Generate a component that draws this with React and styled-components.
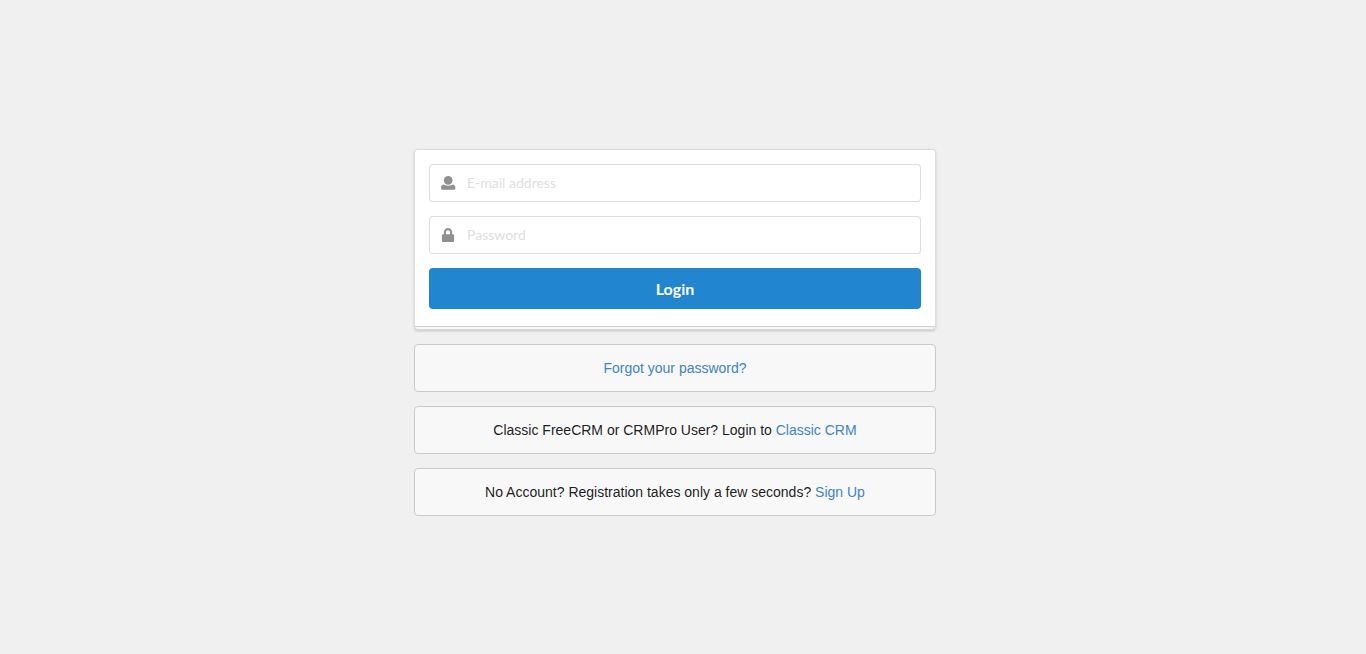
import React from "react";
import styled, { createGlobalStyle } from "styled-components";

const GlobalStyle = createGlobalStyle`
  *, *::before, *::after {
    box-sizing: border-box;
  }
  body {
    margin: 0;
    background: #f0f0f0;
    color: rgba(0, 0, 0, 0.9);
    font-family: Arial, "Liberation Sans", sans-serif;
    font-size: 14px;
    line-height: 18px;
  }
`;

const Page = styled.main`
  display: flex;
  justify-content: center;
  align-items: center;
  min-height: 100vh;
  padding: 11px 16px 0 0;
`;

const Column = styled.div`
  display: flex;
  flex-direction: column;
  gap: 14px;
  width: 100%;
  max-width: 522px;
`;

const LoginCard = styled.form`
  position: relative;
  display: flex;
  flex-direction: column;
  gap: 14px;
  padding: 14px 14px 20px;
  background: #fff;
  border: 1px solid rgba(34, 36, 38, 0.15);
  border-radius: 4px;
  box-shadow: 0 1px 3px 0 rgba(34, 36, 38, 0.16);

  &::after {
    content: "";
    position: absolute;
    left: 0;
    bottom: -3px;
    width: 100%;
    height: 6px;
    border-top: 1px solid rgba(34, 36, 38, 0.18);
    background: rgba(0, 0, 0, 0.03);
  }
`;

const Field = styled.label`
  display: flex;
  align-items: center;
  gap: 12px;
  height: 38px;
  padding: 0 14px 0 11px;
  background: #fff;
  border: 1px solid rgba(34, 36, 38, 0.15);
  border-radius: 4px;

  &:focus-within {
    border-color: #85b7d9;
  }
`;

const Icon = styled.svg`
  flex: none;
  width: 14px;
  height: 14px;
  overflow: visible;
  fill: #909090;
`;

const Input = styled.input`
  flex: 1;
  min-width: 0;
  padding: 0;
  border: 0;
  outline: 0;
  background: transparent;
  color: rgba(0, 0, 0, 0.87);
  font-family: Lato, sans-serif;
  font-size: 14px;
  line-height: 18px;

  &::placeholder {
    color: #dedede;
    opacity: 1;
  }
`;

const LoginButton = styled.button`
  height: 41px;
  padding: 0 24px;
  border: 0;
  border-radius: 4px;
  background: #2185d0;
  color: #fff;
  cursor: pointer;
  font-family: Lato, sans-serif;
  font-size: 16px;
  font-weight: 700;
  line-height: 16px;
`;

const Message = styled.div`
  padding: 14px;
  text-align: center;
  background: #f8f8f8;
  border: 1px solid #c9caca;
  border-radius: 4px;
`;

const Link = styled.a`
  color: #4183c4;
  text-decoration: none;
`;

export default function App() {
  return (
    <>
      <GlobalStyle />
      <Page>
        <Column>
          <LoginCard onSubmit={(e) => e.preventDefault()}>
            <Field>
              <Icon viewBox="0 0 14 14" aria-hidden="true">
                <circle cx="7.2" cy="4.3" r="4.4" />
                <path d="M2.6 8.6 C5 10.1 9.4 10.1 11.8 8.6 C13.4 8.9 14.3 9.8 14.3 11.2 V12.6 Q14.3 13.8 13.1 13.8 H1.3 Q0.1 13.8 0.1 12.6 V11.2 C0.1 9.8 1 8.9 2.6 8.6 Z" />
              </Icon>
              <Input type="text" name="email" placeholder="E-mail address" aria-label="E-mail address" />
            </Field>
            <Field>
              <Icon viewBox="0 0 448 512" aria-hidden="true">
                <path d="M400 224h-24v-72C376 68.2 307.8 0 224 0S72 68.2 72 152v72H48c-26.5 0-48 21.5-48 48v192c0 26.5 21.5 48 48 48h352c26.5 0 48-21.5 48-48V272c0-26.5-21.5-48-48-48zm-104 0H152v-72c0-39.7 32.3-72 72-72s72 32.3 72 72v72z" />
              </Icon>
              <Input type="password" name="password" placeholder="Password" aria-label="Password" />
            </Field>
            <LoginButton type="submit">Login</LoginButton>
          </LoginCard>
          <Message>
            <Link href="#forgot">Forgot your password?</Link>
          </Message>
          <Message>
            Classic FreeCRM or CRMPro User? Login to <Link href="#classic">Classic CRM</Link>
          </Message>
          <Message>
            No Account? Registration takes only a few seconds? <Link href="#register">Sign Up</Link>
          </Message>
        </Column>
      </Page>
    </>
  );
}
